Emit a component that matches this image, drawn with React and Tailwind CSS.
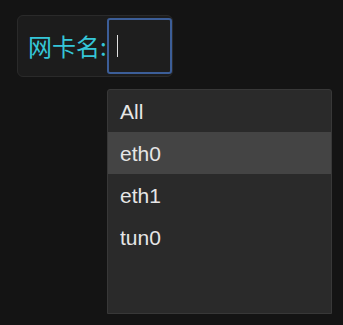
import React from 'react';

const options = ['All', 'eth0', 'eth1', 'tun0'];

const App = () => {
  return (
    <div className="relative w-[343px] h-[325px] bg-[#141414] overflow-hidden">
      {/* Field card */}
      <div className="absolute left-[17px] top-[15px] flex items-center h-[62px] pl-[10px] pr-0 py-[2px] bg-[#1c1c1c] border border-[#2a2a2a] rounded-md">
        <span
          className="text-[24px] leading-none text-[#35c6d8]"
          style={{ fontFamily: '"Noto Sans CJK SC", "Noto Sans", sans-serif' }}
        >
          网卡名:
        </span>
        <div className="relative w-[65px] h-[56px] bg-[#1e1e1e] border-2 border-[#3c5e98] rounded-[3px]">
          <div className="absolute left-[8px] top-[15px] w-px h-[22px] bg-[#e0e0e0]" />
        </div>
      </div>

      {/* Dropdown menu */}
      <div
        className="absolute left-[107px] top-[89px] w-[225px] h-[225px] bg-[#2a2a2a] border border-[#383838] rounded-t-[3px] flex flex-col"
        style={{ fontFamily: '"Liberation Sans", Arial, sans-serif' }}
      >
        {options.map((opt) => (
          <div
            key={opt}
            className={`h-[42px] flex items-center pl-[12px] pt-[2px] text-[21px] text-[#e6e6e6] ${
              opt === 'eth0' ? 'bg-[#444444]' : ''
            }`}
          >
            {opt}
          </div>
        ))}
      </div>
    </div>
  );
};

export default App;
